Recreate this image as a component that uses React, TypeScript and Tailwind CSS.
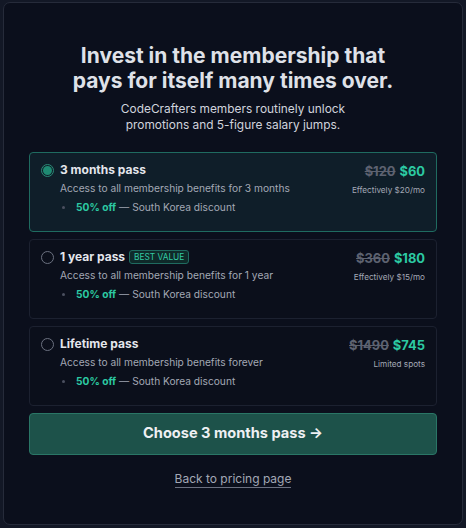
import React from "react";

const font = { fontFamily: 'Inter, "Noto Sans", sans-serif' };

type Plan = {
  title: string;
  desc: string;
  old: string;
  price: string;
  note: string;
  badge?: boolean;
  selected?: boolean;
};

const plans: Plan[] = [
  { title: "3 months pass", desc: "Access to all membership benefits for 3 months", old: "$120", price: "$60", note: "Effectively $20/mo", selected: true },
  { title: "1 year pass", desc: "Access to all membership benefits for 1 year", old: "$360", price: "$180", note: "Effectively $15/mo", badge: true },
  { title: "Lifetime pass", desc: "Access to all membership benefits forever", old: "$1490", price: "$745", note: "Limited spots" },
];

function Card({ p }: { p: Plan }) {
  return (
    <div
      className={
        "flex h-[80px] rounded-[4px] border px-[11px] pt-[9px] " +
        (p.selected ? "border-[#1f6b60] bg-[#0f1e29]" : "border-[#1c2130] bg-[#0b0f1b]")
      }
    >
      <div className="pt-[2px]">
        {p.selected ? (
          <div className="flex h-[13px] w-[13px] items-center justify-center rounded-full border border-[#2a8a76]">
            <div className="h-[9px] w-[9px] rounded-full bg-[#1f8a72]" />
          </div>
        ) : (
          <div className="h-[13px] w-[13px] rounded-full border border-[#6b7180]" />
        )}
      </div>
      <div className="ml-[6px] flex-1">
        <div className="flex h-[16px] items-center gap-[4px]">
          <span className="text-[12px] font-bold leading-[14px] text-[#e4e6ec]">{p.title}</span>
          {p.badge && (
            <span className="rounded-[3px] border border-[#1f6b60] bg-[#0f2a2a] px-[4px] text-[8.3px] leading-[12px] text-[#34c9a4]">
              BEST VALUE
            </span>
          )}
        </div>
        <div className="mt-[3px] text-[10.2px] leading-[14px] text-[#a3a8b5]">{p.desc}</div>
        <div className="mt-[5px] flex items-center text-[10.2px] leading-[14px]">
          <span className="ml-[2px] h-[3px] w-[3px] rounded-full bg-[#4b5060]" />
          <span className="ml-[11px] font-bold text-[#2cc9a2]">50% off</span>
          <span className="ml-[3px] text-[#a3a8b5]">— South Korea discount</span>
        </div>
      </div>
      <div className="flex flex-col items-end">
        <div className="flex items-center gap-[4px] text-[12.9px] font-bold leading-[20px]">
          <span className="text-[#5d6270] line-through">{p.old}</span>
          <span className="text-[#2cc9a2]">{p.price}</span>
        </div>
        <div className="mt-[2px] text-[8.2px] leading-[12px] text-[#a3a8b5]">{p.note}</div>
      </div>
    </div>
  );
}

export default function App() {
  return (
    <div className="h-[528px] w-[466px] bg-[#131826] pb-[3px] pl-[3px] pr-[3px] pt-[2px]" style={font}>
      <div className="flex h-full flex-col rounded-[7px] border border-[#262b3a] bg-[#0b0f1c] px-[25px] pt-[40px]">
        <h1 className="text-center text-[21px] font-bold leading-[25px] text-[#dfe1e8]">
          Invest in the membership that
          <br />
          pays for itself many times over.
        </h1>
        <p className="mt-[8px] text-center text-[11.9px] leading-[16px] text-[#d0d3dc]">
          CodeCrafters members routinely unlock
          <br />
          promotions and 5-figure salary jumps.
        </p>
        <div className="mt-[19px] flex flex-col gap-[7px]">
          {plans.map((p) => (
            <Card key={p.title} p={p} />
          ))}
        </div>
        <button className="mt-[7px] h-[42px] w-full rounded-[4px] border border-[#2a7666] bg-[#1d524a] text-[14.6px] font-bold text-[#eef0f3]">
          Choose 3 months pass →
        </button>
        <div className="mt-[10px] text-center">
          <span className="border-b border-[#6b7080] pb-[1px] text-[12px] text-[#a3a8b5]">Back to pricing page</span>
        </div>
      </div>
    </div>
  );
}
